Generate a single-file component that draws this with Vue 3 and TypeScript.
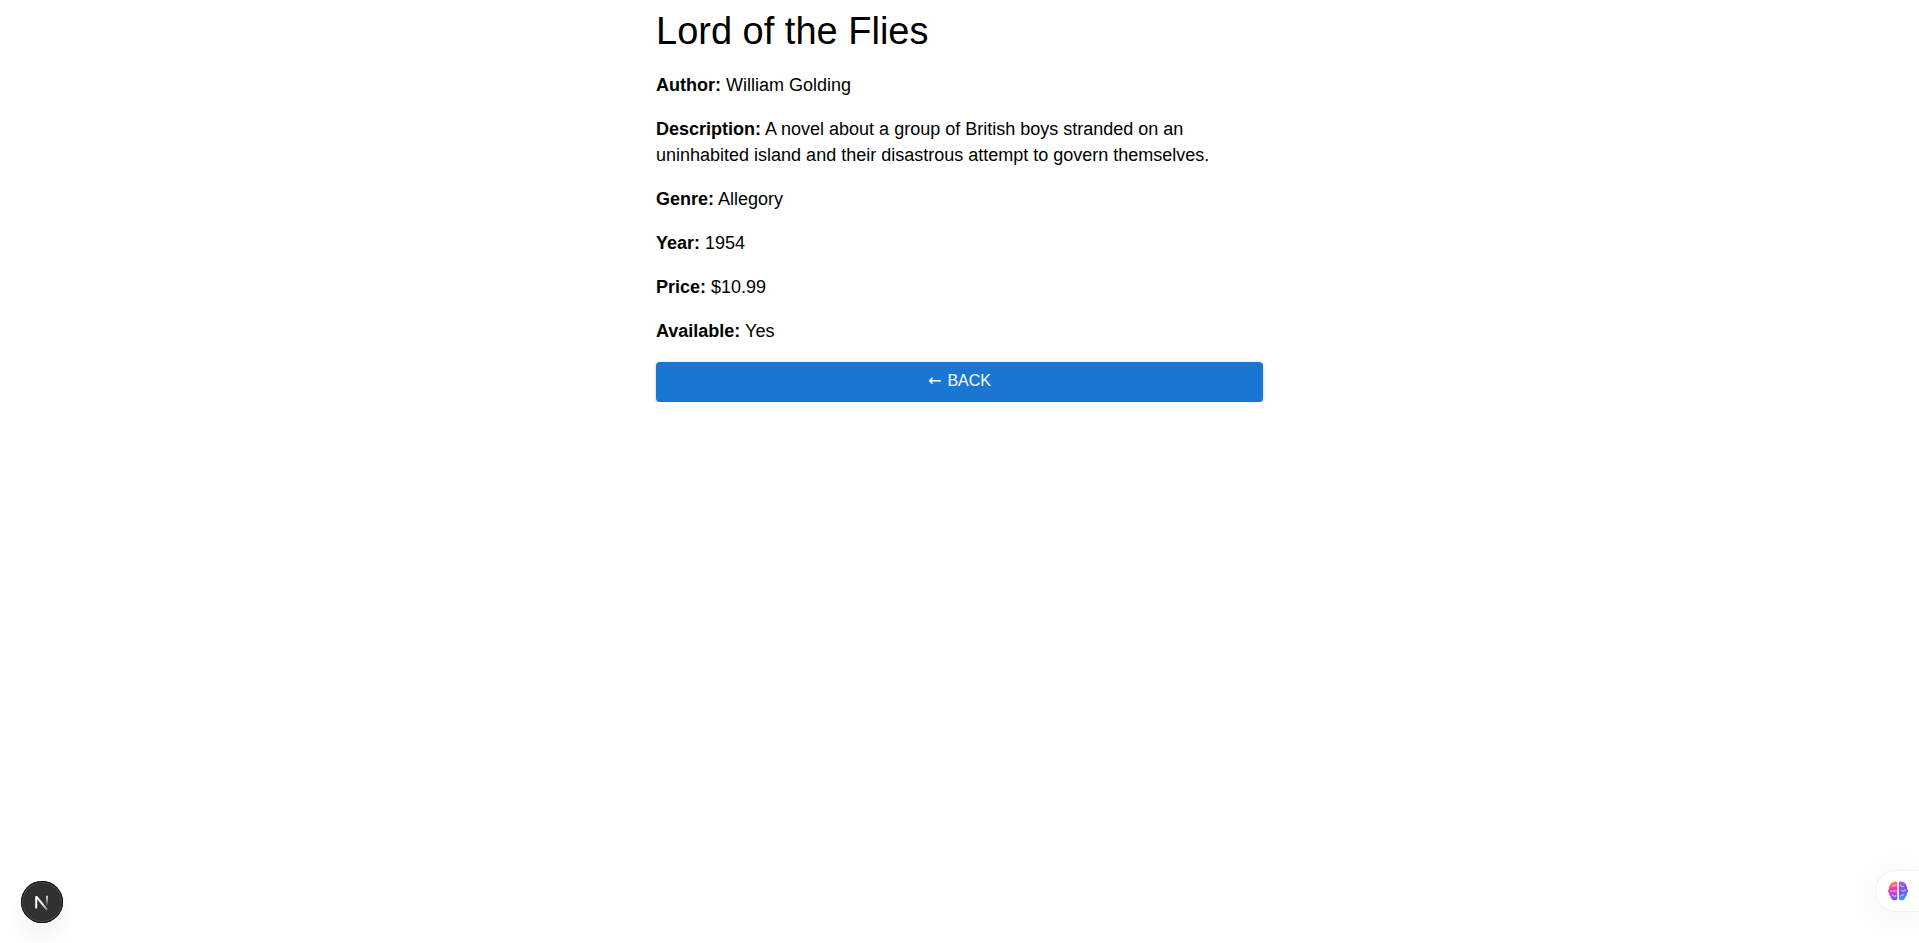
<script setup lang="ts">
interface Field {
  label: string
  value: string
}

const title = 'Lord of the Flies'

const fields: Field[] = [
  { label: 'Author', value: 'William Golding' },
  {
    label: 'Description',
    value:
      'A novel about a group of British boys stranded on an uninhabited island and their disastrous attempt to govern themselves.',
  },
  { label: 'Genre', value: 'Allegory' },
  { label: 'Year', value: '1954' },
  { label: 'Price', value: '$10.99' },
  { label: 'Available', value: 'Yes' },
]

function goBack(): void {
  window.history.back()
}
</script>

<template>
  <main class="book">
    <h1 class="title">{{ title }}</h1>
    <p v-for="field in fields" :key="field.label" class="field">
      <strong>{{ field.label }}:</strong> {{ field.value }}
    </p>
    <button class="back" type="button" @click="goBack">
      <span class="arrow">←</span>
      <span>BACK</span>
    </button>
  </main>

  <button class="dev-badge" type="button" aria-label="Open developer tools">
    <svg width="42" height="42" viewBox="0 0 42 42" fill="none" aria-hidden="true">
      <defs>
        <linearGradient id="stem" x1="0" y1="14" x2="0" y2="25" gradientUnits="userSpaceOnUse">
          <stop stop-color="#fff" />
          <stop offset="1" stop-color="#fff" stop-opacity="0" />
        </linearGradient>
        <linearGradient id="diagonal" x1="21" y1="21" x2="27" y2="29" gradientUnits="userSpaceOnUse">
          <stop stop-color="#fff" />
          <stop offset="1" stop-color="#fff" stop-opacity="0.3" />
        </linearGradient>
      </defs>
      <path d="M15.2 27.5V15.4L26.2 29" stroke="url(#diagonal)" stroke-width="2" stroke-linejoin="bevel" />
      <path d="M26 14.8V26" stroke="url(#stem)" stroke-width="1.8" />
    </svg>
  </button>

  <button class="assistant" type="button" aria-label="Open assistant">
    <svg width="20" height="20" viewBox="0 0 20 20" fill="none" aria-hidden="true">
      <defs>
        <linearGradient id="left-lobe" x1="4" y1="1" x2="7" y2="19" gradientUnits="userSpaceOnUse">
          <stop stop-color="#ff8a3c" />
          <stop offset="0.4" stop-color="#f034b4" />
          <stop offset="1" stop-color="#6a5cff" />
        </linearGradient>
        <linearGradient id="right-lobe" x1="12" y1="1" x2="17" y2="19" gradientUnits="userSpaceOnUse">
          <stop stop-color="#b44ee0" />
          <stop offset="0.5" stop-color="#7555f5" />
          <stop offset="1" stop-color="#20a4ff" />
        </linearGradient>
      </defs>
      <path
        d="M9.3 1.5C8.6.1 6.3 0 5.2 1.3 3.6 1.3 2.2 2.7 2.2 4.3 1 5.2.8 6.6 1.3 7.8-.3 8.8-.3 11.2 1.3 12.2.9 13.8 1.6 15.2 2.8 15.8 2.9 18.2 5 19.7 7 19.3 8 19.3 9 18.7 9.3 18Z"
        fill="url(#left-lobe)"
      />
      <path
        d="M10.9 1.5C11.6.1 13.9 0 15 1.3 16.6 1.3 18 2.7 18 4.3 19.2 5.2 19.4 6.6 18.9 7.8 20.5 8.8 20.5 11.2 18.9 12.2 19.3 13.8 18.6 15.2 17.4 15.8 17.3 18.2 15.2 19.7 13.2 19.3 12.2 19.3 11.2 18.7 10.9 18Z"
        fill="url(#right-lobe)"
      />
      <g stroke="#fff" stroke-opacity="0.65" stroke-width="1.1" stroke-linecap="round">
        <path d="M4.5 5.6C5 4.6 6 4.3 7.8 4.4" />
        <path d="M2.6 10H8.4" />
        <path d="M4.2 14.2C5 15 6.2 15.3 7.8 14.9" />
        <path d="M12.5 4.3C13.2 5.4 14.2 5.7 15.7 5.3" />
        <path d="M13.6 9.2L15.4 10.4L17.7 8.8" />
        <path d="M12.6 15.4C12.9 14.4 14 13.8 15.6 14.1" />
      </g>
    </svg>
  </button>
</template>

<style>
body {
  background: #fff;
}
</style>

<style scoped>
.book {
  display: flex;
  flex-direction: column;
  gap: 18px;
  box-sizing: border-box;
  max-width: 607px;
  margin: 0 auto;
  padding-top: 8px;
  color: #000;
  font-family: Arial, 'Liberation Sans', sans-serif;
  font-size: 18px;
  line-height: 26px;
}

.title {
  margin: 0;
  font-size: 38px;
  font-weight: 400;
  line-height: 46px;
}

.field {
  margin: 0;
}

.back {
  display: flex;
  justify-content: center;
  gap: 6px;
  padding: 6px 16px 8px;
  border: 0;
  border-radius: 4px;
  background: #1976d2;
  color: #fff;
  font: inherit;
  font-size: 16px;
  cursor: pointer;
  box-shadow:
    0 3px 1px -2px rgba(0, 0, 0, 0.2),
    0 2px 2px 0 rgba(0, 0, 0, 0.14),
    0 1px 5px 0 rgba(0, 0, 0, 0.12);
}

.arrow {
  font-family: 'DejaVu Sans', sans-serif;
}

.dev-badge {
  position: fixed;
  bottom: 20px;
  left: 21px;
  width: 42px;
  height: 42px;
  padding: 0;
  border: 0;
  border-radius: 50%;
  background: #303030;
  box-shadow:
    inset 0 0 0 1px #111,
    inset 0 0 0 2px #4a4a4a,
    0 16px 32px -8px rgba(0, 0, 0, 0.14);
  cursor: pointer;
}

.dev-badge svg {
  display: block;
}

.assistant {
  position: fixed;
  right: 0;
  bottom: 32px;
  display: flex;
  align-items: center;
  width: 43px;
  height: 40px;
  padding: 0 0 0 12px;
  border: 0;
  border-radius: 20px 0 0 20px;
  background: #fff;
  box-shadow:
    0 0 2px rgba(0, 0, 0, 0.12),
    0 4px 48px rgba(0, 0, 0, 0.07);
  cursor: pointer;
}
</style>
